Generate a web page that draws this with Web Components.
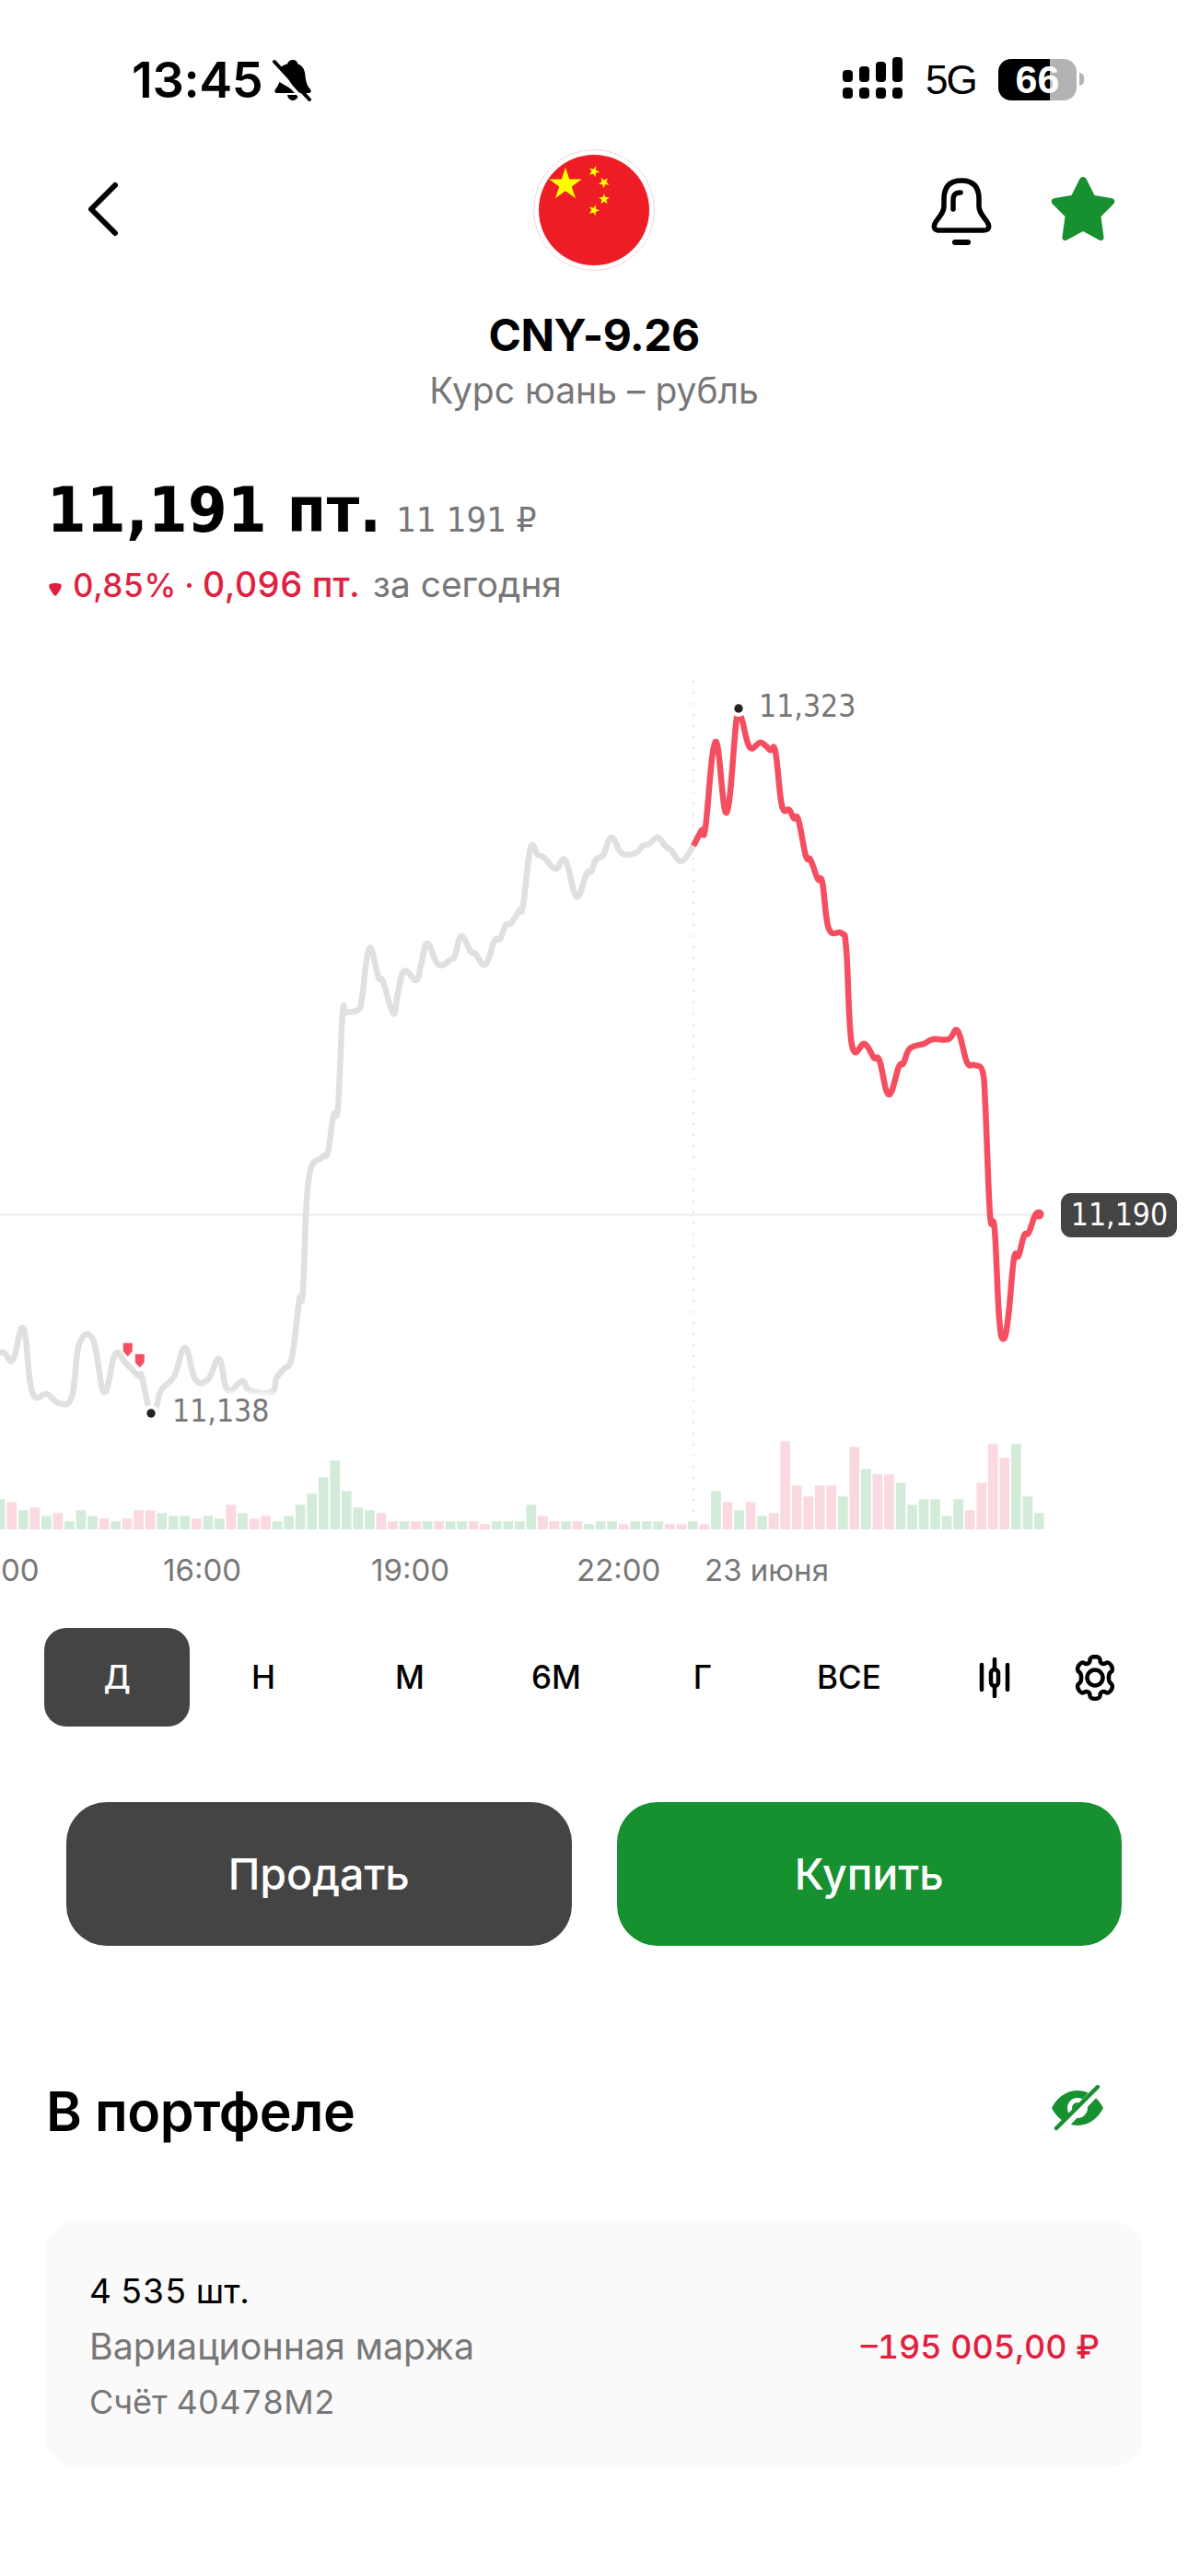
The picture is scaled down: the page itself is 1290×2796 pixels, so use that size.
<!DOCTYPE html>
<html lang="ru">
<head>
<meta charset="utf-8">
<title>CNY-9.26</title>
<style>
  html,body{margin:0;padding:0;background:#fff}
  body{font-family:Inter,"Noto Sans",sans-serif;color:#000}
</style>
</head>
<body>
<app-screen>
  <status-bar></status-bar>
  <nav-header></nav-header>
  <quote-title name="CNY-9.26" desc="Курс юань – рубль"></quote-title>
  <price-block></price-block>
  <price-chart></price-chart>
  <period-tabs></period-tabs>
  <trade-buttons></trade-buttons>
  <portfolio-section></portfolio-section>
</app-screen>
<script>
function def(name, css, html, init){
  customElements.define(name, class extends HTMLElement{
    constructor(){super();const r=this.attachShadow({mode:'open'});
      r.innerHTML='<style>'+css+'</style>'+(typeof html==='function'?html(this):html);}
    connectedCallback(){ if(init) init(this); }
  });
}
const COND='font-family:"DejaVu Sans",sans-serif;font-stretch:condensed;';
def('app-screen',':host{display:block;width:1290px;height:2796px;overflow:hidden;background:#fff}','<slot></slot>');

def('status-bar',`
 :host{display:flex;height:140px;box-sizing:border-box;padding:62px 0 0 143px;align-items:flex-start}
 .time{font:600 54px/50px "Inter",sans-serif;letter-spacing:-.4px;width:152px}
 .bell{margin-top:2px}
 .right{margin-left:auto;display:flex;align-items:flex-start;padding-right:113px}
 .five{font:400 44px/50px "Liberation Sans",sans-serif;margin:0 23px 0 24px;width:56px;letter-spacing:-2px;}
 .batt{width:85px;height:45px;border-radius:14px;margin-top:2px;
   background:linear-gradient(90deg,#000 0 56px,#b3b3b3 56px);color:#fff;font:700 43px/45px "Liberation Sans",sans-serif;text-align:center;}
 .nub{width:5px;height:14px;background:#b3b3b3;border-radius:0 5px 5px 0;margin:17px 0 0 3px}
`,`
 <div class="time">13:45</div>
 <svg class="bell" width="46" height="46" viewBox="0 0 46 46"><path d="M23 1c3 0 5 2 5.500 4.500C34 7.500 36 12 36.500 18c.5 6 1.500 10 5.500 15 1.500 2 .5 4-2 4H6c-2.500 0-3.500-2-2-4 2-3 3.500-5 4.500-8L27 36 10 9c2-2 4-3 7-3.500C17.500 3 20 1 23 1zM17 39h12c-.5 3.500-3 6-6 6s-5.500-2.500-6-6z" fill="#000"/><path d="M3 3l38 41" stroke="#000" stroke-width="4" stroke-linecap="round"/><path d="M1 8l33 36" stroke="#fff" stroke-width="4"/></svg>
 <div class="right">
  <svg width="66" height="46" viewBox="0 0 66 46" fill="#000"><rect x="0" y="33" width="11" height="12" rx="4"/><rect x="18" y="33" width="11" height="12" rx="4"/><rect x="36" y="33" width="11" height="12" rx="4"/><rect x="54" y="33" width="11" height="12" rx="4"/><rect x="0" y="14" width="11" height="13" rx="4"/><rect x="18" y="10" width="11" height="17" rx="4"/><rect x="36" y="5" width="11" height="22" rx="4"/><rect x="54" y="0" width="11" height="27" rx="4"/></svg>
  <div class="five">5G</div>
  <div class="batt">66</div><div class="nub"></div>
 </div>
`);

const smallStar=(x,y,a)=>`<path d="M0-6l1.500 4.100 4.300.2-3.400 2.700 1.200 4.200L0 2.800-3.600 5.200l1.200-4.200-3.400-2.700 4.300-.2z" transform="translate(${x} ${y}) rotate(${a})"/>`;
def('nav-header',`
 :host{display:grid;grid-template-columns:1fr 132px 1fr;height:154px;box-sizing:border-box;padding-top:22px;align-items:start}
 .l{padding:35px 0 0 94px}
 .flag{display:block}
 .r{display:flex;justify-content:flex-end;padding:29px 78px 0 0;gap:62px}
`,`
 <div class="l"><svg width="36" height="60" viewBox="0 0 36 60" style="display:block"><path d="M31 4L5 30l26 26" fill="none" stroke="#000" stroke-width="6" stroke-linecap="round" stroke-linejoin="round"/></svg></div>
 <svg class="flag" width="132" height="132" viewBox="0 0 132 132">
  <circle cx="66" cy="66" r="65.500" fill="#fff" stroke="#f3d5d8" stroke-width="1"/>
  <circle cx="66" cy="66" r="60" fill="#ee1c25"/>
  <g fill="#ff0"><path d="M35 19.500l4.200 12.900H52.800l-11 8 4.200 12.900-11-8-11 8 4.200-12.900-11-8h13.600z"/>
  ${smallStar(66,24,20)}${smallStar(77,36,40)}${smallStar(77,54,0)}${smallStar(66,66,20)}</g>
 </svg>
 <div class="r">
  <svg width="68" height="74" viewBox="0 0 68 74" fill="none" stroke="#000" stroke-width="5.500" stroke-linecap="round" stroke-linejoin="round" style="margin-top:2px"><path d="M34 3c-13 0-19 7-19 20v8c0 6-4 10-9 17-3 5-2 9 4 9h48c6 0 7-4 4-9-5-7-9-11-9-17v-8C53 10 47 3 34 3z"/><path d="M25 34V24c0-5 2-8 8-8"/><path d="M27 70h14" stroke-width="6"/></svg>
  <svg width="72" height="72" viewBox="0 0 72 72" fill="#17902f"><path d="M36 1c2 0 3 1 4 3l8.500 17 18 3c4 .7 5 4 2.500 6.500L55.500 44l3 22c.5 3.500-2 5-5 3.500L36 60l-17.500 9.500c-3 1.500-5.500 0-5-3.500l3-22L3 30.500C.5 28 1.500 24.700 5.500 24l18-3L32 4c1-2 2-3 4-3z"/></svg>
 </div>
`);

def('quote-title',`
 :host{display:block;text-align:center}
 .n{font:700 48px/60px Inter,sans-serif;letter-spacing:-.6px;margin-top:40px}
 .d{font:400 39px/44px Inter,sans-serif;color:#777;margin-top:8px}
`, el=>`<div class="n">${el.getAttribute('name')}</div><div class="d">${el.getAttribute('desc')}</div>`);

def('price-block',`
 :host{display:block;box-sizing:border-box;height:255px;padding:68px 0 0 51px}
 .p{display:flex;align-items:baseline;gap:16px;height:80px}
 .v{${COND}font-weight:700;font-size:68px;line-height:80px;letter-spacing:.5px}
 .s{${COND}font-size:38px;line-height:44px;color:#777}
 .c{display:flex;align-items:baseline;font:400 38.800px/44px Inter,sans-serif;color:#777;margin-top:18px;padding-left:1px}
 .c b{font-weight:500;color:#e0203f;font-size:35px;font-feature-settings:"tnum"}
 .c b.w{font-size:38px}
 svg{margin-right:11px}
 .dot{margin:0 9px}
`,`
 <div class="p"><span class="v">11,191 пт.</span><span class="s">11 191 ₽</span></div>
 <div class="c"><svg width="16" height="16" viewBox="0 0 16 16"><path d="M2 2c3-1.500 9-1.500 12 0 1 1 1 3 0 5l-4.500 7c-.8 1-2.200 1-3 0L2 7C1 5 1 3 2 2z" fill="#e0203f"/></svg><b>0,85%</b><b class="dot">·</b><b class="w">0,096 пт.</b><span style="margin-left:15px">за сегодня</span></div>
`);

def('price-chart',`:host{display:block;height:1030px} svg{display:block} text{font-family:Inter,sans-serif} .n{${COND}}`,
`<svg id="c" width="1290" height="1030" viewBox="0 700 1290 1030"></svg>`,
el=>{
 const grey=[[-4,1470],[4,1467],[14,1475],[25.500,1441],[35,1510],[51,1512],[64,1522],[78,1515],[86,1458],[101,1453],[113,1510],[125,1469],[136,1478],[150,1492],[154,1493],[162,1528],[169,1528],[175,1508],[189,1493],[201,1462],[212,1496],[226,1496],[238,1474],[247,1508],[263,1498],[271,1508],[295,1510],[300,1495],[308,1485],[317,1472],[325,1410],[329,1400],[335,1280],[350,1255],[356,1250],[362,1210],[367,1200],[372,1100],[376,1098],[389,1095],[393,1083],[401,1028],[411,1060],[416,1064],[427,1099],[432,1077],[439,1053],[452,1063],[457,1047],[464,1023],[476,1046],[490,1040],[494,1036],[501,1015],[511,1032],[516,1034],[527,1046],[537,1020],[543,1018],[549,1003],[555,1001],[564,987],[568,982],[576,920],[584,927],[591,930],[603,942],[614,933],[626,972],[637,947],[642,945],[647,932],[655,927],[664,908],[675,925],[690,925],[698,917],[705,915],[714,908],[723,918],[729,922],[740,934],[753,917]];
 const red=[[753,917],[762,900],[766,897],[777,804],[789,881],[800,778],[805,778],[814,810],[826,805],[836,813],[842,815],[849,873],[857,878],[862,887],[867,889],[875,928],[880,932],[888,953],[893,957],[900,1007],[914,1012],[919,1030],[925,1133],[939,1132],[949,1147],[955,1150],[965,1187],[976,1157],[981,1153],[988,1137],[1003,1132],[1013,1127],[1030,1127],[1040,1118],[1050,1152],[1058,1155],[1067,1162],[1070,1200],[1075,1317],[1080,1333],[1085,1430],[1090,1452],[1095,1427],[1101,1365],[1106,1362],[1112,1340],[1117,1337],[1124,1318],[1128,1316]];
 const smooth=p=>{let d='M'+p[0].join(' ');const t=.2;
   for(let i=0;i<p.length-1;i++){const a=p[i-1]||p[i],b=p[i],c=p[i+1],e=p[i+2]||c;
     d+=` C${(b[0]+(c[0]-a[0])*t).toFixed(1)} ${(b[1]+(c[1]-a[1])*t).toFixed(1)} ${(c[0]-(e[0]-b[0])*t).toFixed(1)} ${(c[1]-(e[1]-b[1])*t).toFixed(1)} ${c[0]} ${c[1]}`;}
   return d;};
 const g='#d3ebd9',k='#fbd9e0';
 const v=[[1278,g],[1287,k],[1314,g],[1305,k],[1332,g],[1323,k],[1350,g],[1314,g],[1332,g],[1341,k],[1350,g],[1341,k],[1314,k],[1314,k],[1323,g],[1332,g],[1332,g],[1341,k],[1332,g],[1341,g],[1296,k],[1323,g],[1341,k],[1332,k],[1350,g],[1332,g],[1296,g],[1260,g],[1206,g],[1152,g],[1251,g],[1305,g],[1314,g],[1323,k],[1350,k],[1350,g],[1350,k],[1350,g],[1350,k],[1350,g],[1350,g],[1350,k],[1359,k],[1350,g],[1350,g],[1350,g],[1296,g],[1332,k],[1350,k],[1350,g],[1350,k],[1359,g],
  [1350,g],[1350,g],[1359,k],[1350,g],[1350,g],[1350,g],[1359,k],[1359,k],[1350,g],[1359,k],[1251,g],[1287,k],[1314,g],[1287,k],[1332,g],[1323,k],[1089,k],[1233,k],[1269,k],[1233,k],[1233,k],[1269,g],[1107,k],[1179,g],[1197,k],[1197,k],[1224,g],[1296,g],[1278,g],[1278,g],[1332,g],[1278,g],[1314,k],[1224,k],[1098,k],[1143,k],[1098,g],[1269,g],[1323,g]];
 let bars='';v.forEach((b,i)=>{const x=-5.1+i*12.535;const h=(1376-b[0])/3;bars+=`<rect x="${x.toFixed(2)}" y="${(1659-h).toFixed(1)}" width="10.700" height="${h.toFixed(1)}" fill="${b[1]}"/>`;});
 const n=(x,y,s,f='#777',a='')=>`<text class="n" x="${x}" y="${y}" font-size="33.500" fill="${f}" ${a}>${s}</text>`;
 const t=(x,y,s)=>`<text x="${x}" y="${y}" font-size="33" fill="#777">${s}</text>`;
 el.shadowRoot.getElementById('c').innerHTML=`
 <defs><filter id="soft" x="-20%" y="-40%" width="140%" height="180%"><feGaussianBlur stdDeviation="3"/></filter></defs>
 <line x1="0" x2="1125" y1="1317.500" y2="1317.500" stroke="#ececec" stroke-width="2"/>
 <line x1="753" x2="753" y1="738" y2="1660" stroke="#e4e4e4" stroke-width="2" stroke-dasharray="2 10"/>
 ${bars}
 <path d="${smooth(grey)}" fill="none" stroke="#e0e0e0" stroke-width="6.500" stroke-linejoin="round"/>
 <path d="${smooth(red)}" fill="none" stroke="#f54e60" stroke-width="6.500" stroke-linejoin="round"/>
 <circle cx="1128" cy="1317" r="5.500" fill="#f54e60"/>
 <rect x="181" y="1511" width="116" height="40" fill="#fff" filter="url(#soft)"/>
 <circle cx="164" cy="1533" r="9" fill="#fff"/><circle cx="164" cy="1533" r="4.700" fill="#222"/>
 <circle cx="802" cy="768" r="9" fill="#fff"/><circle cx="802" cy="768" r="4.700" fill="#222"/>
 ${n(187,1542,'11,138')}${n(824,777,'11,323')}
 <path d="M133 1456h11.500v10l-5.700 6.500-5.800-6.500z" fill="#f54e60" stroke="#fff" stroke-width="1.500"/>
 <path d="M146 1468h11.500v10l-5.700 6.500-5.800-6.500z" fill="#f54e60" stroke="#fff" stroke-width="1.500"/>
 <rect x="1152" y="1294" width="126" height="48" rx="11" fill="#444"/>
 ${n(1215.5,1329,'11,190','#fff','text-anchor="middle"')}
 ${t(1,1715,'00')}${t(177,1715,'16:00')}${t(403,1715,'19:00')}${t(626,1715,'22:00')}${t(765,1715,'23 июня')}
 `;
});

def('period-tabs',`
 :host{display:grid;grid-template-columns:repeat(7,158px) auto;justify-content:start;column-gap:1px;height:107px;margin-top:36px;padding-left:48px;align-items:center;justify-items:center;font:500 35px/107px Inter,sans-serif}
 .a{background:#444;color:#fff;border-radius:24px;justify-self:stretch;text-align:center;height:107px}
 div{text-align:center}
`,`
 <div class="a">Д</div><div>Н</div><div>М</div><div>6М</div><div>Г</div><div>ВСЕ</div>
 <svg width="38" height="44" viewBox="0 0 38 44" fill="none" stroke="#000" stroke-width="4.500" stroke-linecap="round" stroke-linejoin="round" style="margin-right:2px"><path d="M5 8v27M33 8v27M19 2v11M19 31v11"/><rect x="15" y="13" width="8" height="18" rx="4"/></svg>
 <svg width="46" height="50" viewBox="0 0 46 50" fill="none" stroke="#000" stroke-width="4.500" stroke-linejoin="round" style="margin-left:5px"><path d="M17.500 5.500c0-4.500 11-4.500 11 0 0 4 3 5.500 6.500 3.500 4-2.300 9.500 7 5.500 9.500-3.500 2-3.500 11 0 13 4 2.500-1.500 11.800-5.500 9.500-3.500-2-6.500-.5-6.500 3.500 0 4.500-11 4.500-11 0 0-4-3-5.500-6.500-3.500-4 2.300-9.500-7-5.500-9.500 3.500-2 3.500-11 0-13-4-2.500 1.500-11.800 5.500-9.500 3.500 2 6.500.5 6.500-3.500z"/><circle cx="23" cy="25" r="8.500"/></svg>
`);

def('trade-buttons',`
 :host{display:flex;gap:49px;padding:82px 72px 0;}
 div{flex:1;height:156px;border-radius:44px;display:flex;align-items:center;justify-content:center;color:#fff;font:500 46.500px/1 Inter,sans-serif}
 .s{background:#444}.b{background:#17902f}
`,`<div class="s">Продать</div><div class="b">Купить</div>`);

def('portfolio-section',`
 :host{display:block;padding:0 49px}
 .h{display:flex;justify-content:space-between;align-items:center;margin-top:145px;height:70px;padding:0 42px 0 1px}
 h2{margin:0;font:600 59px/70px Inter,sans-serif;letter-spacing:-.4px}
 .h svg{margin-bottom:8px}
 .card{margin-top:83px;height:268px;background:#fafafa;border-radius:36px;box-sizing:border-box;padding:6px 47px 0 48px;display:flex;justify-content:space-between;align-items:center;font:400 39.300px/60px Inter,sans-serif;color:#777}
 .k{color:#000;font-size:37px;font-feature-settings:"tnum"}
 .a{font-size:36px;font-feature-settings:"tnum"}
 .m{color:#e0203f;font-weight:500;font-size:36px;font-feature-settings:"tnum"}
`,`
 <div class="h"><h2>В портфеле</h2>
  <svg width="58" height="50" viewBox="0 0 58 50"><path fill-rule="evenodd" d="M29 6C42 6 52 15 57 25 52 35 42 44 29 44 16 44 6 35 1 25 6 15 16 6 29 6zm0 8a11 11 0 1 0 0 22 11 11 0 0 0 0-22z" fill="#17902f"/><circle cx="29" cy="25" r="6" fill="#17902f"/><path d="M8 50L53 3" stroke="#fff" stroke-width="10"/><path d="M6 47L51 2" stroke="#17902f" stroke-width="4.500" stroke-linecap="round"/></svg>
 </div>
 <div class="card"><div><div class="k">4 535 шт.</div><div>Вариационная маржа</div><div class="a">Счёт 40478М2</div></div><div class="m">–195 005,00 ₽</div></div>
`);
</script>
</body>
</html>
